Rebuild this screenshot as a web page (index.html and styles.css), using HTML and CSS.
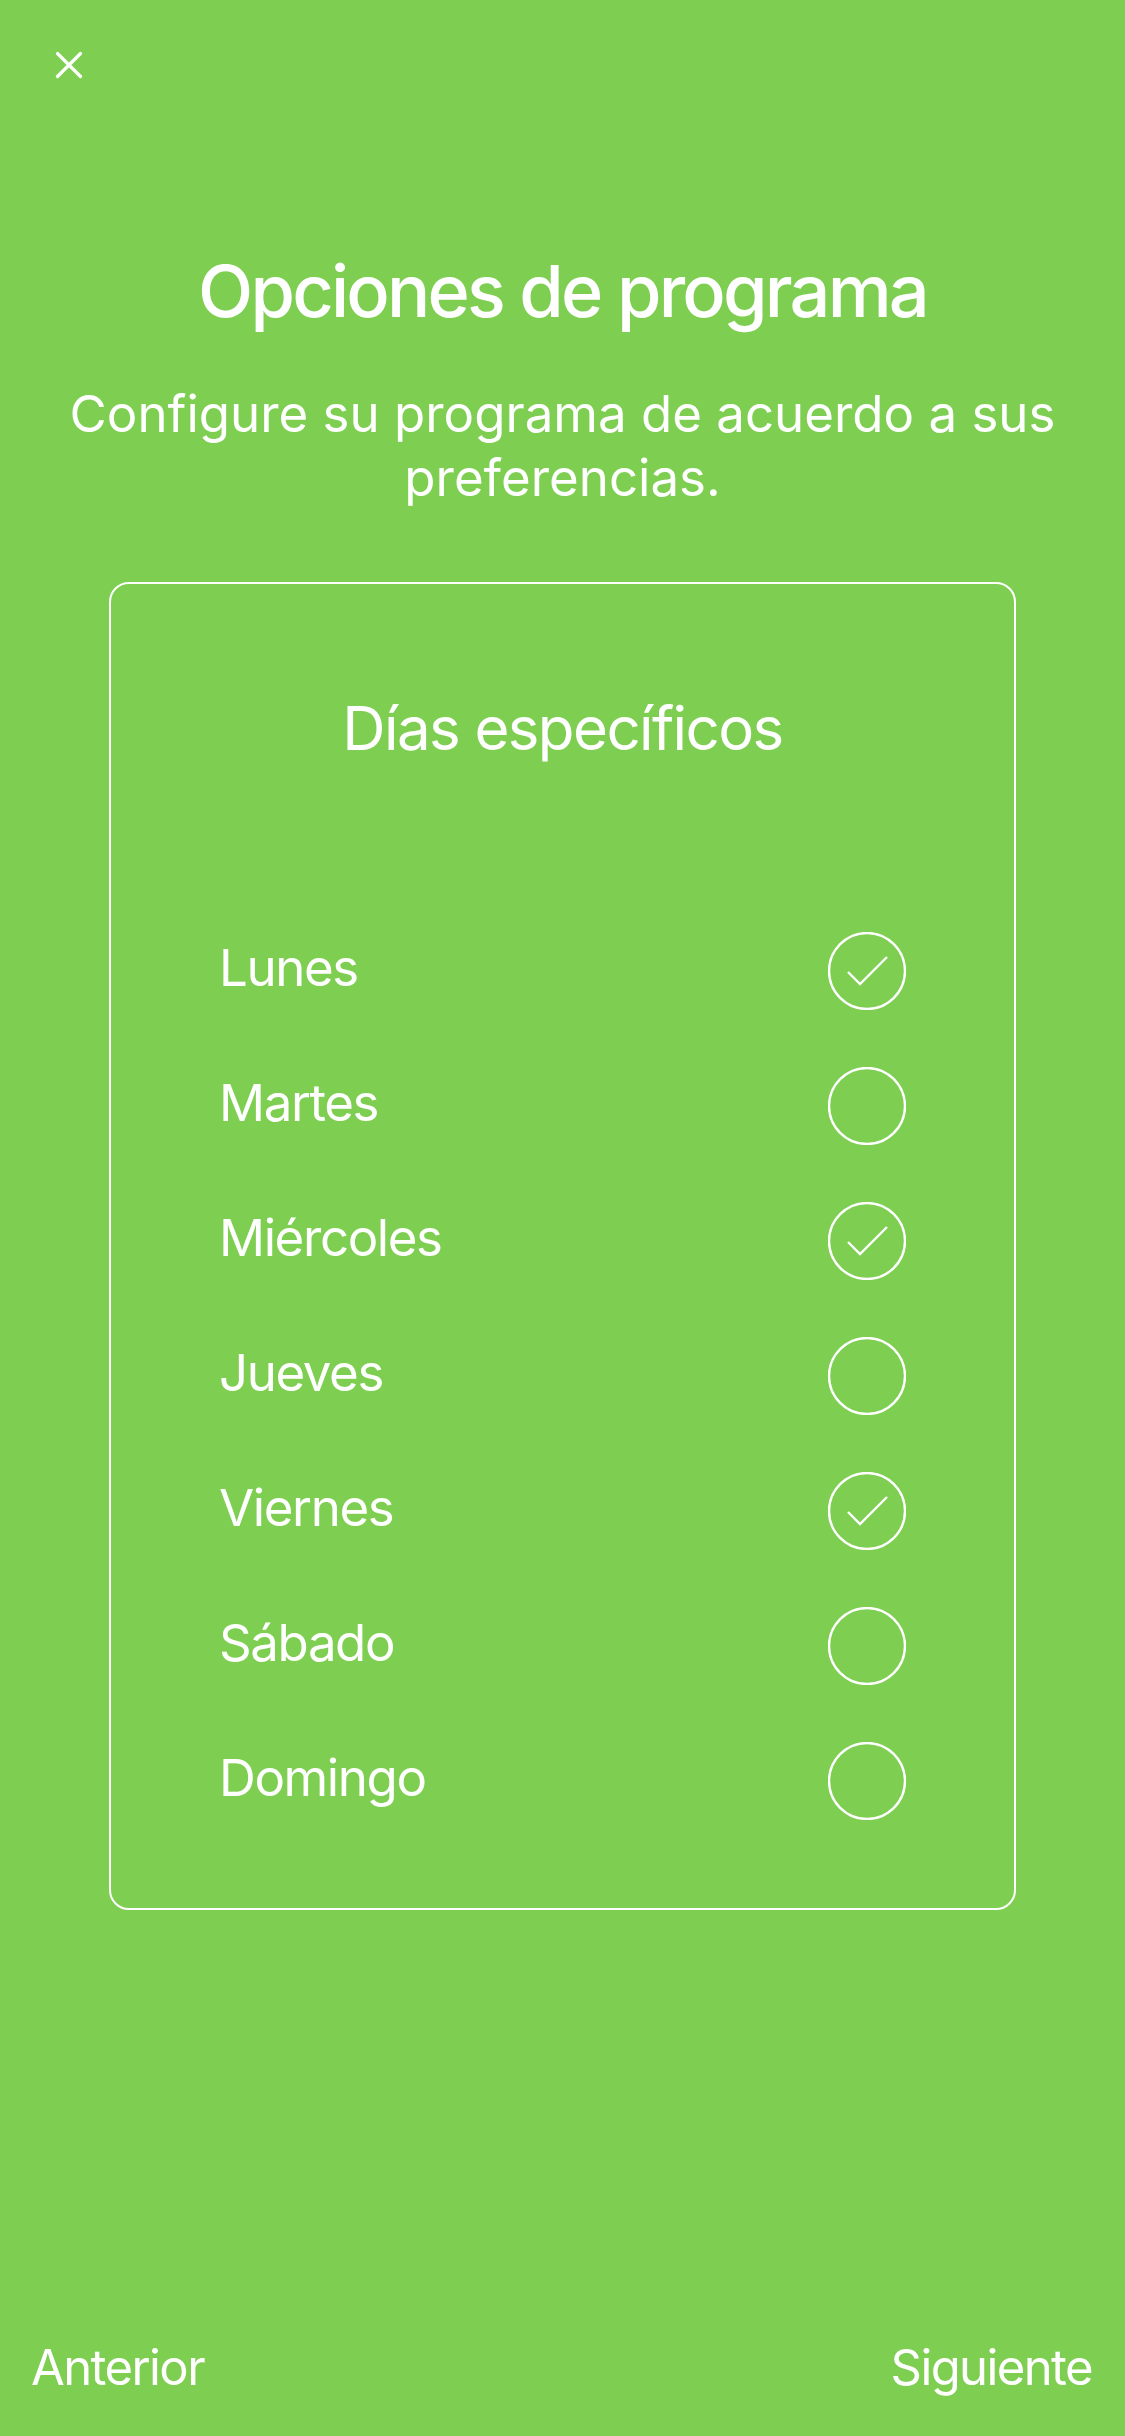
FILE: index.html
```html
<!DOCTYPE html>
<html>
<head>
    <title>Opciones de programa</title>
    <link rel="stylesheet" href="styles.css">
</head>
<body>
    <div class="screen">
        <div class="top-bar">
            <button class="close-btn" type="button" aria-label="Cerrar">
                <svg width="28" height="28" viewBox="0 0 28 28">
                    <line x1="2.5" y1="2.5" x2="25.5" y2="25.5" />
                    <line x1="25.5" y1="2.5" x2="2.5" y2="25.5" />
                </svg>
            </button>
        </div>

        <h1 class="title">Opciones de programa</h1>
        <p class="subtitle">Configure su programa de acuerdo a sus preferencias.</p>

        <div class="card">
            <h2 class="card-title">Días específicos</h2>
            <ul class="day-list">
                <li class="day-row">
                    <span class="day-name">Lunes</span>
                    <svg class="check" viewBox="0 0 78 78"><circle cx="39" cy="39" r="38" /><polyline points="20,40 32,52 59,25" /></svg>
                </li>
                <li class="day-row">
                    <span class="day-name">Martes</span>
                    <svg class="check" viewBox="0 0 78 78"><circle cx="39" cy="39" r="38" /></svg>
                </li>
                <li class="day-row">
                    <span class="day-name">Miércoles</span>
                    <svg class="check" viewBox="0 0 78 78"><circle cx="39" cy="39" r="38" /><polyline points="20,40 32,52 59,25" /></svg>
                </li>
                <li class="day-row">
                    <span class="day-name">Jueves</span>
                    <svg class="check" viewBox="0 0 78 78"><circle cx="39" cy="39" r="38" /></svg>
                </li>
                <li class="day-row">
                    <span class="day-name">Viernes</span>
                    <svg class="check" viewBox="0 0 78 78"><circle cx="39" cy="39" r="38" /><polyline points="20,40 32,52 59,25" /></svg>
                </li>
                <li class="day-row">
                    <span class="day-name">Sábado</span>
                    <svg class="check" viewBox="0 0 78 78"><circle cx="39" cy="39" r="38" /></svg>
                </li>
                <li class="day-row">
                    <span class="day-name">Domingo</span>
                    <svg class="check" viewBox="0 0 78 78"><circle cx="39" cy="39" r="38" /></svg>
                </li>
            </ul>
        </div>

        <div class="bottom-nav">
            <a class="nav-link" href="#">Anterior</a>
            <a class="nav-link" href="#">Siguiente</a>
        </div>
    </div>
</body>
</html>
```

FILE: styles.css
```css
body {
    margin: 0;
    font-family: Inter, "Noto Sans", sans-serif;
    background-color: #7ecf51;
    color: #fff;
}
.screen {
    min-height: 2436px;
    display: flex;
    flex-direction: column;
}
.top-bar {
    padding: 51px 0 0 55px;
    height: 28px;
}
.close-btn {
    display: block;
    padding: 0;
    border: none;
    background: none;
    cursor: pointer;
}
.close-btn svg {
    display: block;
}
.close-btn line {
    stroke: #fff;
    stroke-width: 3.2;
    stroke-linecap: round;
}
.title {
    margin: 169px 0 0;
    font-size: 72px;
    font-weight: 500;
    line-height: 86px;
    text-align: center;
    letter-spacing: -2.8px;
}
.subtitle {
    margin: 48px 0 0;
    padding: 0 48px;
    font-size: 51px;
    font-weight: 400;
    line-height: 64px;
    text-align: center;
}
.card {
    margin: 72px 109px 0;
    padding: 108px 108px 60px;
    border: 2px solid #fff;
    border-radius: 20px;
}
.card-title {
    margin: 0;
    font-size: 60px;
    font-weight: 400;
    line-height: 72px;
    text-align: center;
    letter-spacing: -1.6px;
}
.day-list {
    list-style: none;
    margin: 139px 0 0;
    padding: 0;
}
.day-row {
    display: flex;
    align-items: center;
    justify-content: space-between;
    height: 135px;
}
.day-name {
    font-size: 51px;
    line-height: 62px;
    padding-bottom: 6px;
    letter-spacing: -1.4px;
}
.check {
    width: 78px;
    height: 78px;
    display: block;
}
.check circle,
.check polyline {
    fill: none;
    stroke: #fff;
    stroke-width: 2.4;
}
.bottom-nav {
    margin-top: auto;
    display: flex;
    justify-content: space-between;
    padding: 0 33px 37px 31px;
}
.nav-link {
    color: #fff;
    text-decoration: none;
    font-size: 49px;
    line-height: 62px;
    letter-spacing: -1.6px;
}
```
